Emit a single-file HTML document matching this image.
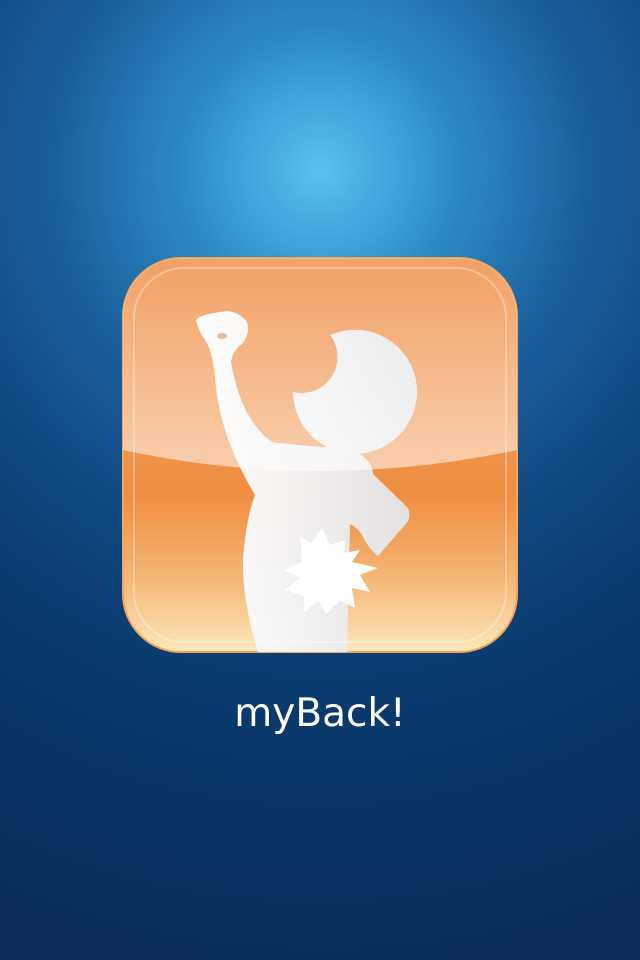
<!DOCTYPE html>
<html><head><style>
html,body{margin:0;padding:0}
body{width:640px;height:960px;overflow:hidden;position:relative;
background:radial-gradient(circle at 320px 170px,#55c3f2 0px,#2d88c4 140px,#1a5e9c 270px,#0f4a85 380px,#0a3b6f 520px,#072c5a 800px);}
.t{position:absolute;left:0;width:640px;top:691px;text-align:center;color:#fff;font:39px "DejaVu Sans","Liberation Sans",sans-serif}
</style></head><body>
<svg width="640" height="960" style="position:absolute;left:0;top:0">
<defs>
<radialGradient id="sh" cx="320" cy="640" r="200" gradientUnits="userSpaceOnUse" gradientTransform="translate(0,500) scale(1,0.22) translate(0,-250)">
<stop offset="0" stop-color="#000" stop-opacity="0.35"/><stop offset="1" stop-color="#000" stop-opacity="0"/></radialGradient>
<linearGradient id="bg" x1="0" y1="258" x2="0" y2="652" gradientUnits="userSpaceOnUse">
<stop offset="0" stop-color="#f19552"/><stop offset="0.48" stop-color="#f0934a"/><stop offset="0.6" stop-color="#ee8e40"/><stop offset="0.82" stop-color="#f5b879"/><stop offset="1" stop-color="#fde7bb"/></linearGradient>
<linearGradient id="gl" x1="0" y1="262" x2="0" y2="470" gradientUnits="userSpaceOnUse">
<stop offset="0" stop-color="#fff" stop-opacity="0.12"/><stop offset="1" stop-color="#fff" stop-opacity="0.55"/></linearGradient>
<linearGradient id="fg" x1="200" y1="0" x2="420" y2="0" gradientUnits="userSpaceOnUse">
<stop offset="0" stop-color="#fff"/><stop offset="1" stop-color="#e2e2e4"/></linearGradient>
<clipPath id="c"><rect x="123" y="258" width="394" height="394" rx="58"/></clipPath>
</defs>
<ellipse cx="320" cy="650" rx="200" ry="40" fill="url(#sh)"/>
<rect x="123" y="258" width="394" height="394" rx="58" fill="url(#bg)" stroke="#f6a55a" stroke-width="2"/>
<g clip-path="url(#c)">
<path d="M293 392 A62 62 0 1 0 330 335 A36 36 0 0 1 293 392 Z" fill="url(#fg)"/>
<path d="M196 320 Q200 314 228 311 Q240 313 247 322 Q251 333 242 344 Q233 350 231 362 Q241 420 272 442 Q300 446 345 448 Q372 456 373 474 L408 508 Q412 518 405 525 L378 556 Q368 548 362 535 Q358 528 350 524 L347 652 L258 652 Q242 600 243 560 Q246 518 255 495 Q222 440 216 388 Q214 360 208 345 Q198 330 196 320 Z" fill="url(#fg)" opacity="0.97"/>
<ellipse cx="222" cy="336" rx="5" ry="3" fill="#e9a06a"/>
<path d="M300 536 L311 544 L322 528 L330 545 L345 540 L344 553 L360 550 L352 562 L378 568 L360 575 L370 592 L352 588 L355 608 L340 600 L326 614 L318 600 L304 612 L304 596 L285 590 L300 578 L284 570 L302 562 Z" fill="#fff"/>
<path d="M123 258 H517 V450 Q320 492 123 450 Z" fill="url(#gl)"/>
<rect x="134" y="268" width="372" height="374" rx="50" fill="none" stroke="#fff" stroke-opacity="0.3" stroke-width="2"/>
</g>
</svg>
<div class="t">myBack!</div>
</body></html>
